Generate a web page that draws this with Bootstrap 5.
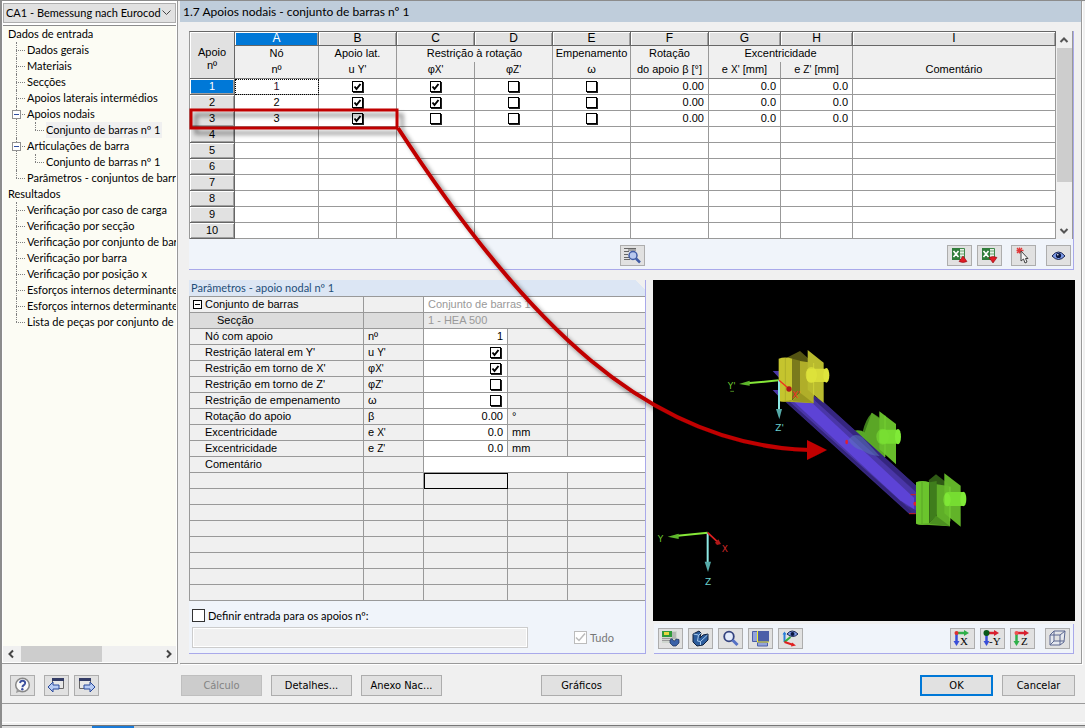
<!DOCTYPE html>
<html lang="pt">
<head>
<meta charset="utf-8">
<meta name="viewport" content="width=device-width, initial-scale=1">
<title>1.7 Apoios nodais</title>
<link href="https://cdn.jsdelivr.net/npm/bootstrap@5.3.0/dist/css/bootstrap.min.css" rel="stylesheet">
<style>
  body { font-family: Lato, "Noto Sans", sans-serif; font-size: 11px; line-height: 16px; color: #000; background: #f0f0f0; }
  .app { border-left: 2px solid #8c8c8c; border-top: 1px solid #8c8c8c; }
  .grid-font { font-family: "Liberation Sans", Arial, sans-serif; font-size: 11px; }

  /* navigation */
  .side { width: 176px; flex: none; background: #fff; border-right: 1px solid #999; border-bottom: 1px solid #999; padding: 2px 1px 1px; }
  .case-select { appearance: none; width: 100%; height: 20px; border: 1px solid #adadad; border-radius: 0; padding: 0 14px 0 2px; font-size: 11px; line-height: 16px; color: #000;
    background: #e1e1e1 url("data:image/svg+xml,%3Csvg xmlns='http://www.w3.org/2000/svg' width='9' height='6'%3E%3Cpath d='M.5.5l4 4 4-4' fill='none' stroke='%23444'/%3E%3C/svg%3E") no-repeat right 4px center; }
  .tree-box { background: #fcfcf4; border-top: 1px solid #8c8c8c; margin-top: 2px; overflow: hidden; padding-left: 5px; }
  .tree, .tree ul { list-style: none; margin: 0; padding: 0; white-space: nowrap; }
  .tree a { color: #000; text-decoration: none; display: inline-block; height: 16px; vertical-align: top; }
  .tree a.active { background: #f0f0f0; padding-right: 2px; }
  .tree ul li { position: relative; padding-left: 19px; }
  .tree ul li::before { content: ""; position: absolute; left: 8px; top: 0; bottom: 0; border-left: 1px dotted #808080; }
  .tree ul li:last-child::before { bottom: auto; height: 8px; }
  .tree ul li::after { content: ""; position: absolute; left: 8px; top: 8px; width: 9px; border-top: 1px dotted #808080; }
  .twisty { position: absolute; z-index: 1; left: 4px; top: 4px; width: 9px; height: 9px; padding: 0; border: 1px solid #919191; background: linear-gradient(#2f4f9f, #2f4f9f) center/5px 1px no-repeat #fff; }
  .hscroll { height: 16px; background: #f0f0f0; }
  .hscroll .thumb { width: 81px; background: #cdcdcd; margin-left: 4px; }

  /* main page */
  .sheet { border-right: 1px solid #999; border-bottom: 1px solid #999; margin-right: 3px; margin-left: 2px; box-shadow: 1px 1px #fff; }
  .sheet-title { background: #bfcddb; height: 21px; line-height: 21px; font-size: 12px; font-weight: 400; padding-left: 3px; margin: 0; }
  .panel-box { background: #f0f4fa; border: solid #a9a9ea; border-width: 0 1px 1px 0; }
  .top-panel { margin: 9px 7px 0 9px; }
  .lower { margin: 10px 6px 9px 9px; gap: 7px; }
  .data { border-collapse: separate; border-spacing: 0; table-layout: fixed; width: 100%; border-left: 1px solid #999; }
  .data th, .data td { font-weight: 400; padding: 0 4px; height: 16px; line-height: 15px; border: solid #999; border-width: 0 1px 1px 0; white-space: nowrap; overflow: hidden; }
  .supports { border-top: 1px solid #666; }
  .supports td { background: #fff; text-align: center; }
  .supports td.num { text-align: right; }
  .supports thead th { background: #f0f0f0; text-align: center; padding: 0; }
  .supports thead .letters th { height: 14px; line-height: 13px; background: #e1e1e1; border-color: #666; box-shadow: inset 1px 1px #fff, inset -1px 0 #a0a0a0; font-size: 12px; }
  .supports thead .letters th.on { background: #0078d7; color: #fff; }
  .supports thead .letters .corner { font-size: 11px; box-shadow: inset 1px 1px #fff; padding-top: 8px; }
  .supports .names th { border-bottom: 0; height: 16px; line-height: 14px; vertical-align: top; }
  .supports .units th { height: 17px; border-bottom-color: #808080; line-height: 14px; vertical-align: top; }
  .supports tbody th { background: #e1e1e1; text-align: center; border-color: #666; line-height: 13px; box-shadow: inset 1px 1px #fff, inset -1px -1px #a0a0a0; }
  .supports tbody th.on { background: #0078d7; color: #fff; }
  .supports td.focused { outline: 1px dotted #000; outline-offset: -1px; color: #301030; }
  .tiny { font-size: 10px; }
  .tick { appearance: none; display: block; width: 11px; height: 11px; margin: 0 auto; border: 1px solid #000; background: #fff; box-shadow: 1px 1px #222; }
  .tick:checked { background: #fff url("data:image/svg+xml,%3Csvg xmlns='http://www.w3.org/2000/svg' width='9' height='9'%3E%3Cpath d='M1.500 4.500l2 2.500 4-5' fill='none' stroke='%23000' stroke-width='2'/%3E%3C/svg%3E") center no-repeat; }
  .vscroll { width: 17px; flex: none; background: #f0f0f0; border-right: 1px solid #999; }
  .vscroll .thumb { height: 134px; background: #cdcdcd; margin: 0 0 0 1px; }
  .vscroll svg, .hscroll svg { display: block; flex: none; }
  .tool { width: 25px; height: 21px; flex: none; padding: 0; border: 1px solid #adadad; border-radius: 0; background: #e1e1e1; display: flex; align-items: center; justify-content: center; }
  .tool svg { display: block; }
  .tool-row { height: 30px; padding: 2px 2px 0 5px; }

  .left-panel { width: 457px; flex: none; }
  .panel-title { background: linear-gradient(225deg, #f0f0f0 7px, #dce6f4 7px); height: 16px; line-height: 16px; color: #1f4e79; font-size: 11px; font-weight: 400; margin: 0; padding-left: 2px; }
  .props { border-top: 1px solid #999; }
  .props th, .props td { background: #f0f0f0; text-align: left; }
  .props th { padding-left: 15px; position: relative; }
  .props td.val { background: #fff; text-align: right; }
  .props td.wide { background: #fff; color: #999; text-align: left; }
  .props .sub th, .props .sub td { background: #dcdcdc; }
  .props .sub td.wide { background: #eaeaea; }
  .props th.sub-name { padding-left: 27px; }
  .props .tick { margin: 0 2px 0 auto; }
  .props td.cursor { outline: 1px solid #000; outline-offset: -1px; }
  .props tr > :last-child { border-right: 0; }
  .minus { position: absolute; left: 3px; top: 3px; width: 9px; height: 9px; padding: 0; border: 1px solid #000; background: linear-gradient(#000, #000) center/5px 1px no-repeat #fff; }
  .apply { height: 52px; padding: 8px 0 0 3px; }
  .apply-row { height: 13px; gap: 3px; margin-bottom: 5px; }
  .box13 { appearance: none; flex: none; width: 13px; height: 13px; margin: 0; border: 1px solid #333; background: #fff; }
  .box13:disabled { border-color: #bcbcbc; }
  .box13:checked { background: #fff url("data:image/svg+xml,%3Csvg xmlns='http://www.w3.org/2000/svg' width='11' height='11'%3E%3Cpath d='M1 5.500l3 3 6-7' fill='none' stroke='%23bbb' stroke-width='1.500'/%3E%3C/svg%3E") center no-repeat; }
  .node-list { width: 336px; height: 21px; border: 1px solid #ccc; outline: 1px solid #fff; outline-offset: -2px; background: #f0f0f0; margin-right: 46px; }
  .muted-label { color: #777; margin-left: 3px; }
  .view { background: #000; height: 341px; flex: auto; display: block; width: 100%; }
  .view text { font-family: "DejaVu Sans", sans-serif; font-size: 27px; }
  .view-tools { height: 30px; margin: 3px 1px 0 1px; padding: 0 3px 0 4px; gap: 5px; }

  /* bottom bars */
  .commands { height: 39px; padding: 11px 10px 0 8px; }
  .cmd { height: 21px; width: 81px; border: 1px solid #adadad; border-radius: 0; background: #e1e1e1; color: #000; padding: 0; font-family: "DejaVu Sans Condensed", "Noto Sans", sans-serif; font-size: 11px; line-height: 18px; }
  .cmd:disabled { background: #ccc; color: #838383; border-color: #bfbfbf; }
  .cmd.short { width: 73px; }
  .cmd.primary { border: 2px solid #0078d7; line-height: 16px; }
  .status { height: 20px; border-top: 1px solid #999; border-bottom: 1px solid #fff; }
  .edge { height: 3px; border-top: 1px solid #777; margin-top: 2px; background: linear-gradient(90deg, #ddd 90px, #1b7bd8 90px, #1b7bd8 132px, #d0d0d0 132px); }
  .callout { position: absolute; left: 0; top: 0; z-index: 5; pointer-events: none; }
</style>
</head>
<body>
<div class="app d-flex flex-column min-vh-100 position-relative">
  <div class="d-flex flex-grow-1">
    <nav class="side d-flex flex-column">
      <select class="case-select" aria-label="Caso"><option>CA1 - Bemessung nach Eurocod</option></select>
      <div class="tree-box flex-grow-1">
        <ul class="tree">
          <li><a href="#">Dados de entrada</a>
            <ul>
              <li><a href="#">Dados gerais</a></li>
              <li><a href="#">Materiais</a></li>
              <li><a href="#">Secções</a></li>
              <li><a href="#">Apoios laterais intermédios</a></li>
              <li><button class="twisty" aria-label="Recolher"></button><a href="#">Apoios nodais</a>
                <ul><li><a href="#" class="active">Conjunto de barras nº 1</a></li></ul></li>
              <li><button class="twisty" aria-label="Recolher"></button><a href="#">Articulações de barra</a>
                <ul><li><a href="#">Conjunto de barras nº 1</a></li></ul></li>
              <li><a href="#">Parâmetros - conjuntos de barr</a></li>
            </ul>
          </li>
          <li><a href="#">Resultados</a>
            <ul>
              <li><a href="#">Verificação por caso de carga</a></li>
              <li><a href="#">Verificação por secção</a></li>
              <li><a href="#">Verificação por conjunto de bar</a></li>
              <li><a href="#">Verificação por barra</a></li>
              <li><a href="#">Verificação por posição x</a></li>
              <li><a href="#">Esforços internos determinante</a></li>
              <li><a href="#">Esforços internos determinante</a></li>
              <li><a href="#">Lista de peças por conjunto de</a></li>
            </ul>
          </li>
        </ul>
      </div>
      <div class="hscroll d-flex align-items-stretch">
        <svg width="14" height="16"><path d="M10 4.500L6.500 8l3.500 3.500" fill="none" stroke="#444" stroke-width="2"/></svg>
        <div class="thumb"></div>
        <svg class="ms-auto" width="14" height="16"><path d="M5 4.500L8.500 8 5 11.500" fill="none" stroke="#444" stroke-width="2"/></svg>
      </div>
    </nav>

    <main class="sheet flex-grow-1 d-flex flex-column">
      <h1 class="sheet-title">1.7 Apoios nodais - conjunto de barras nº 1</h1>
      <section class="panel-box grid-font top-panel">
        <div class="d-flex">
          <table class="data supports">
            <colgroup><col style="width:45px"><col style="width:84px"><col style="width:78px"><col style="width:78px"><col style="width:78px"><col style="width:78px"><col style="width:78px"><col style="width:72px"><col style="width:72px"><col></colgroup>
            <thead>
              <tr class="letters"><th rowspan="3" class="corner">Apoio<br>nº</th><th class="on">A</th><th>B</th><th>C</th><th>D</th><th>E</th><th>F</th><th>G</th><th>H</th><th>I</th></tr>
              <tr class="names"><th>Nó</th><th>Apoio lat.</th><th colspan="2">Restrição à rotação</th><th>Empenamento</th><th>Rotação</th><th colspan="2">Excentricidade</th><th></th></tr>
              <tr class="units"><th>nº</th><th>u <span class="tiny">Y'</span></th><th>φ<span class="tiny">X'</span></th><th>φ<span class="tiny">Z'</span></th><th>ω</th><th>do apoio β [°]</th><th>e <span class="tiny">X'</span> [mm]</th><th>e <span class="tiny">Z'</span> [mm]</th><th>Comentário</th></tr>
            </thead>
            <tbody>
              <tr><th class="on">1</th><td class="focused">1</td><td><input class="tick" type="checkbox" aria-label="uY 1" checked></td><td><input class="tick" type="checkbox" aria-label="φX 1" checked></td><td><input class="tick" type="checkbox" aria-label="φZ 1"></td><td><input class="tick" type="checkbox" aria-label="ω 1"></td><td class="num">0.00</td><td class="num">0.0</td><td class="num">0.0</td><td></td></tr>
              <tr><th>2</th><td>2</td><td><input class="tick" type="checkbox" aria-label="uY 2" checked></td><td><input class="tick" type="checkbox" aria-label="φX 2" checked></td><td><input class="tick" type="checkbox" aria-label="φZ 2"></td><td><input class="tick" type="checkbox" aria-label="ω 2"></td><td class="num">0.00</td><td class="num">0.0</td><td class="num">0.0</td><td></td></tr>
              <tr><th>3</th><td>3</td><td><input class="tick" type="checkbox" aria-label="uY 3" checked></td><td><input class="tick" type="checkbox" aria-label="φX 3"></td><td><input class="tick" type="checkbox" aria-label="φZ 3"></td><td><input class="tick" type="checkbox" aria-label="ω 3"></td><td class="num">0.00</td><td class="num">0.0</td><td class="num">0.0</td><td></td></tr>
              <tr><th>4</th><td></td><td></td><td></td><td></td><td></td><td></td><td></td><td></td><td></td></tr>
              <tr><th>5</th><td></td><td></td><td></td><td></td><td></td><td></td><td></td><td></td><td></td></tr>
              <tr><th>6</th><td></td><td></td><td></td><td></td><td></td><td></td><td></td><td></td><td></td></tr>
              <tr><th>7</th><td></td><td></td><td></td><td></td><td></td><td></td><td></td><td></td><td></td></tr>
              <tr><th>8</th><td></td><td></td><td></td><td></td><td></td><td></td><td></td><td></td><td></td></tr>
              <tr><th>9</th><td></td><td></td><td></td><td></td><td></td><td></td><td></td><td></td><td></td></tr>
              <tr><th>10</th><td></td><td></td><td></td><td></td><td></td><td></td><td></td><td></td><td></td></tr>
            </tbody>
          </table>
          <div class="vscroll d-flex flex-column">
            <svg width="16" height="17"><path d="M4.500 11L8 7.500l3.500 3.500" fill="none" stroke="#555" stroke-width="2"/></svg>
            <div class="thumb"></div>
            <svg class="mt-auto" width="16" height="17"><path d="M4.500 7L8 10.500 11.500 7" fill="none" stroke="#555" stroke-width="2"/></svg>
          </div>
        </div>
        <div class="tool-row d-flex align-items-center">
          <div class="col"></div>
          <button class="tool" aria-label="Procurar">
            <svg width="19" height="17" viewBox="0 0 19 17"><path d="M1 1.500h12M1 4.500h5M1 7.500h4M1 10.500h5M5 3h8M1 12.500h6" stroke="#666"/><circle cx="10" cy="8.500" r="4" fill="#b8c8ee" stroke="#3f5ba5" stroke-width="1.500"/><path d="M13 11.500l4 4" stroke="#3f5ba5" stroke-width="2.500"/></svg>
          </button>
          <div class="col d-flex justify-content-end">
            <button class="tool" aria-label="Exportar para Excel" style="margin-right:5px">
              <svg width="19" height="17" viewBox="0 0 19 17"><path d="M2.500 1.500h12v11h-12z" fill="#e4f0e4" stroke="#3f8a4a"/><path d="M2 1h8v12H2z" fill="#2f7d3b"/><path d="M3.500 4l5 6M8.500 4l-5 6" stroke="#fff" stroke-width="1.600"/><path d="M10 4h4M10 7h4M10 10h4" stroke="#6aa574"/><path d="M9 14.500L13 9l4 5.500q-4 2-8 0z" fill="#e01b24" stroke="#8b0a10" stroke-width=".6"/></svg>
            </button>
            <button class="tool" aria-label="Importar do Excel" style="margin-right:9px">
              <svg width="19" height="17" viewBox="0 0 19 17"><path d="M2.500 1.500h12v11h-12z" fill="#e4f0e4" stroke="#3f8a4a"/><path d="M2 1h8v12H2z" fill="#2f7d3b"/><path d="M3.500 4l5 6M8.500 4l-5 6" stroke="#fff" stroke-width="1.600"/><path d="M10 4h4M10 7h4" stroke="#6aa574"/><path d="M9 10.500q4-2 8 0L13 16z" fill="#e01b24" stroke="#8b0a10" stroke-width=".6"/></svg>
            </button>
            <button class="tool" aria-label="Selecionar" style="margin-right:10px">
              <svg width="19" height="17" viewBox="0 0 19 17"><path d="M3 1l5 5M8 1L3 6M5.500.5v6M2.500 3.500h7" stroke="#e03838" stroke-width="1.300"/><path d="M7 4v10l2.500-2 1.500 4 2-1-1.500-3.500H14z" fill="#f4f4f4" stroke="#444"/></svg>
            </button>
            <button class="tool" aria-label="Visualizar">
              <svg width="17" height="15" viewBox="0 0 17 15"><path d="M2 8q6.500-8 13 0-6.500 7-13 0z" fill="#7d9bea" stroke="#1a2550"/><circle cx="8.500" cy="7.500" r="2.600" fill="#0a1640"/><circle cx="7.800" cy="6.800" r=".8" fill="#fff"/></svg>
            </button>
          </div>
        </div>
      </section>

      <div class="lower d-flex flex-grow-1">
        <section class="left-panel panel-box d-flex flex-column">
          <h2 class="panel-title">Parâmetros - apoio nodal nº 1</h2>
          <table class="data props grid-font">
            <colgroup><col style="width:174px"><col style="width:60px"><col style="width:84px"><col style="width:60px"><col></colgroup>
            <tbody>
              <tr><th><button class="minus" aria-label="Recolher"></button>Conjunto de barras</th><td></td><td colspan="3" class="wide">Conjunto de barras 1</td></tr>
              <tr class="sub"><th class="sub-name">Secção</th><td></td><td colspan="3" class="wide">1 - HEA 500</td></tr>
              <tr><th>Nó com apoio</th><td>nº</td><td class="val">1</td><td></td><td></td></tr>
              <tr><th>Restrição lateral em Y'</th><td>u <span class="tiny">Y'</span></td><td class="val"><input class="tick" type="checkbox" aria-label="Restrição lateral em Y'" checked></td><td></td><td></td></tr>
              <tr><th>Restrição em torno de X'</th><td>φ<span class="tiny">X'</span></td><td class="val"><input class="tick" type="checkbox" aria-label="Restrição em torno de X'" checked></td><td></td><td></td></tr>
              <tr><th>Restrição em torno de Z'</th><td>φ<span class="tiny">Z'</span></td><td class="val"><input class="tick" type="checkbox" aria-label="Restrição em torno de Z'"></td><td></td><td></td></tr>
              <tr><th>Restrição de empenamento</th><td>ω</td><td class="val"><input class="tick" type="checkbox" aria-label="Restrição de empenamento"></td><td></td><td></td></tr>
              <tr><th>Rotação do apoio</th><td>β</td><td class="val">0.00</td><td>°</td><td></td></tr>
              <tr><th>Excentricidade</th><td>e <span class="tiny">X'</span></td><td class="val">0.0</td><td>mm</td><td></td></tr>
              <tr><th>Excentricidade</th><td>e <span class="tiny">Z'</span></td><td class="val">0.0</td><td>mm</td><td></td></tr>
              <tr><th>Comentário</th><td></td><td colspan="3" class="wide"></td></tr>
              <tr><th></th><td></td><td class="cursor"></td><td></td><td></td></tr>
              <tr><th></th><td></td><td></td><td></td><td></td></tr>
              <tr><th></th><td></td><td></td><td></td><td></td></tr>
              <tr><th></th><td></td><td></td><td></td><td></td></tr>
              <tr><th></th><td></td><td></td><td></td><td></td></tr>
              <tr><th></th><td></td><td></td><td></td><td></td></tr>
              <tr><th></th><td></td><td></td><td></td><td></td></tr>
              <tr><th></th><td></td><td></td><td></td><td></td></tr>
            </tbody>
          </table>
          <div class="apply">
            <div class="apply-row d-flex align-items-center">
              <input class="box13" type="checkbox" id="apply"><label for="apply">Definir entrada para os apoios nº:</label>
            </div>
            <div class="d-flex align-items-center">
              <input class="node-list" type="text" aria-label="Apoios nº" disabled>
              <input class="box13" type="checkbox" id="all" checked disabled><label for="all" class="muted-label">Tudo</label>
            </div>
          </div>
        </section>

        <section class="col d-flex flex-column">
          <svg class="view" viewBox="39 15 1266 1023" preserveAspectRatio="xMinYMin meet" role="img" aria-label="Modelo 3D">
            <path d="M398 288h19v20zM398 345h19v20z" fill="#4a38a8"/>
            <path d="M668 470q8-36 28-57l34 22v120l-48-42z" fill="#3f7d1c"/>
            <path d="M695 413l40 30v110l-55-50 -15-5z" fill="#5aa626"/>
            <path d="M718 409l50 38v121l-50-45z" fill="#67bd2b"/>
            <path d="M735 422v124" stroke="#7ddb38" stroke-width="2"/>
            <ellipse cx="653" cy="488" rx="30" ry="22" fill="#58a828"/>
            <rect x="718" y="464" width="62" height="42" rx="10" fill="#76dc31"/><ellipse cx="774" cy="485" rx="9" ry="23" fill="#80ea38"/><ellipse cx="728" cy="485" rx="19" ry="24" fill="#7ae034" opacity=".6"/>
            <path d="M436 380L522 362 552 382 828 632V716H807z" fill="#3a2a86"/>
            <path d="M444 380L520 372 828 652V706L800 692z" fill="#4a36a8"/>
            <path d="M462 380l46-4L822 668v34L780 676z" fill="#5d43d6"/>
            <path d="M446 382L812 712" stroke="#33247a" stroke-width="7"/>
            <path d="M530 372L828 640" stroke="#352680" stroke-width="13"/>
            <path d="M625 495q18-26 42-8l52 56q-30-2-50-16-30-6-44-32z" fill="#5a74b8" opacity=".55"/>
            <path d="M807 716h20M812 659h16" stroke="#c22" stroke-width="3"/><ellipse cx="620" cy="501" rx="4" ry="7" fill="#e02030"/><circle cx="826" cy="686" r="6" fill="#e02030"/>
            <path d="M866 616l22-18 38 30-6 100-34-10z" fill="#2f5a15"/>
            <path d="M828 622q18-8 40 0v124q-20 8-40 0z" fill="#6bc42d"/>
            <path d="M846 619v129" stroke="#5aa626" stroke-width="3"/>
            <path d="M868 622l22-4v106l-22 20z" fill="#3f7d1c"/>
            <path d="M890 628l40 6v120l-102-6 40-4 22-20z" fill="#5fae28"/>
            <path d="M868 746l20-24 42 32z" fill="#4b8f20"/>
            <path d="M913 595l49 37v123l-49-40z" fill="#67bd2b" opacity=".95"/>
            <path d="M930 635v104" stroke="#83e040" stroke-width="2"/>
            <rect x="915" y="651" width="60" height="42" rx="9" fill="#76dc31"/><ellipse cx="970" cy="672" rx="9" ry="22" fill="#80ea38"/><ellipse cx="921" cy="674" rx="11" ry="20" fill="#85f03a" opacity=".6"/>
            <path d="M440 248l40-20 38 34v112l-60-2z" fill="#545412"/>
            <path d="M416 251q18-7 41 0v124q-20 8-41 3z" fill="#c5c42e"/><path d="M436 249v129" stroke="#b0b02a" stroke-width="3"/>
            <path d="M457 251l23 6v94l-23 23z" fill="#7a7a1c"/><path d="M480 258l41 6v121l-104-6 40-4 23-22z" fill="#b0ae29"/>
            <path d="M457 378l24-24 40 31z" fill="#98961f"/>
            <path d="M503 225l48 38v121l-48-40z" fill="#b9bb2e"/>
            <path d="M521 264v100" stroke="#dadc3a" stroke-width="2"/>
            <rect x="500" y="281" width="64" height="40" rx="12" fill="#d8dc38"/><ellipse cx="559" cy="301" rx="9" ry="22" fill="#dfe53d"/><ellipse cx="514" cy="300" rx="17" ry="24" fill="#e0e43c" opacity=".7"/>
            <path d="M416 316L320 325" stroke="#86e838" stroke-width="6"/><path d="M297 327l32-10v15z" fill="#5db52b"/>
            <path d="M417 316v88" stroke="#8ee9e4" stroke-width="6"/><path d="M408 402h18l-8 31z" fill="#55aaa8"/>
            <path d="M417 316l28 24" stroke="#f03020" stroke-width="4"/><circle cx="447" cy="342" r="8" fill="#b01818"/>
            <text x="263" y="341" fill="#6cc830">Y'</text><path d="M271 349h11" stroke="#6cc830" stroke-width="2"/><text x="406" y="468" fill="#6cd0cc">Z'</text><text x="456" y="370" fill="#f03028">X'</text>
            <path d="M203 773L105 783" stroke="#86e838" stroke-width="6"/><path d="M83 785l33-9v16z" fill="#5db52b"/>
            <path d="M203 774v88" stroke="#8ee9e4" stroke-width="6"/><path d="M194 860h19l-9 31z" fill="#55aaa8"/>
            <path d="M203 773l28 26" stroke="#e02020" stroke-width="5"/><path d="M225 803l10-10 8 14-12 3z" fill="#b01818"/>
            <text x="53" y="801" fill="#6cc830">Y</text><text x="195" y="929" fill="#6cd0cc">Z</text><text x="245" y="830" fill="#d02828">X</text>
          </svg>
          <div class="view-tools panel-box d-flex align-items-center">
            <button class="tool" aria-label="Renderização">
              <svg width="19" height="17" viewBox="0 0 19 17"><path d="M1 1h15v12H1z" fill="#cfd6cf"/><path d="M1 1h10v6H1z" fill="#2f9a3b"/><path d="M3 2h5v3H3z" fill="#e8d840"/><path d="M1 8.500h9M1 10.500h9M12 2v7M14 2v7" stroke="#999"/><path d="M9 10l2-1.500 1 2 2 .5 1-2 3 .5v3.500L15 16h-3l-3-3z" fill="#3b62a8" stroke="#1b2d55" stroke-width=".7"/></svg>
            </button>
            <button class="tool" aria-label="Modelo">
              <svg width="19" height="17" viewBox="0 0 19 17"><path d="M2 4l6-3 2 2-1 5 3-3 5-1v6l-5 5-6 1-4-4z" fill="#2c5c9c" stroke="#10203c"/><path d="M2.500 4l5 1-1 6 3 .5L16.500 5M8 5l2-2M9.500 11.500V15" fill="none" stroke="#a8cbee"/></svg>
            </button>
            <button class="tool" aria-label="Zoom">
              <svg width="19" height="17" viewBox="0 0 19 17"><circle cx="8" cy="6.500" r="4.800" fill="#e3ebfb" stroke="#34437f" stroke-width="1.800"/><path d="M11.500 10l5 5" stroke="#5571c4" stroke-width="3"/></svg>
            </button>
            <button class="tool" aria-label="Janelas">
              <svg width="19" height="17" viewBox="0 0 19 17"><path d="M1.500 1.500h5v10h-5zM6.500 12.500h10v3.500h-10z" fill="#93a3da" stroke="#4c5fa8"/><path d="M7 1h11v11H7z" fill="#4c5fa8"/><path d="M6.500 1v11H18" fill="none" stroke="#f2ee30"/></svg>
            </button>
            <button class="tool me-auto" aria-label="Vista">
              <svg width="19" height="17" viewBox="0 0 19 17"><path d="M6 4q5-6 11 0-5 5-11 0z" fill="#7d9bea" stroke="#1a2550"/><circle cx="11.500" cy="4" r="2" fill="#0a1640"/><path d="M3.500 3v9" stroke="#2b7ed8" stroke-width="2"/><path d="M3.500 12l6-5" stroke="#2fae3f" stroke-width="2"/><path d="M3.500 12l9 3" stroke="#e02020" stroke-width="2"/><path d="M1.500 4.500l2-3 2 3z" fill="#2b7ed8"/><path d="M11 12.500l4 3-5 1z" fill="#e02020"/></svg>
            </button>
            <button class="tool" aria-label="Vista X">
              <svg width="19" height="17" viewBox="0 0 19 17"><path d="M3 3h9" stroke="#2fb04a" stroke-width="2.500"/><path d="M11 0l5 3-5 3z" fill="#2fb04a"/><path d="M3.500 4v8" stroke="#3a4fd8" stroke-width="2.500"/><path d="M.5 11h6l-3 5z" fill="#3a4fd8"/><circle cx="3.500" cy="3" r="2" fill="#e03030"/><text x="7" y="15" font-family="Liberation Serif" font-size="11">X</text></svg>
            </button>
            <button class="tool" aria-label="Vista -Y">
              <svg width="19" height="17" viewBox="0 0 19 17"><path d="M3 3h9" stroke="#d82030" stroke-width="2.500"/><path d="M11 0l5 3-5 3z" fill="#d82030"/><path d="M3.500 4v8" stroke="#3a4fd8" stroke-width="2.500"/><path d="M.5 11h6l-3 5z" fill="#3a4fd8"/><circle cx="3.500" cy="3" r="3" fill="#0a5a18"/><text x="6" y="15" font-family="Liberation Serif" font-size="11">-Y</text></svg>
            </button>
            <button class="tool" aria-label="Vista Z" style="margin-right:5px">
              <svg width="19" height="17" viewBox="0 0 19 17"><path d="M3 3h9" stroke="#d82030" stroke-width="2.500"/><path d="M11 0l5 3-5 3z" fill="#d82030"/><path d="M3.500 4v8" stroke="#2fb04a" stroke-width="2.500"/><path d="M.5 11h6l-3 5z" fill="#2fb04a"/><circle cx="3.500" cy="3" r="2" fill="#f05050"/><text x="8" y="15" font-family="Liberation Serif" font-size="11">Z</text></svg>
            </button>
            <button class="tool" aria-label="Isométrica">
              <svg width="19" height="17" viewBox="0 0 19 17"><path d="M2 5l4-4h11l-1 11-4 3H2zM2 5h10l5-4M12 5v10M6 1v10h10M6 11l-4 4" fill="#e8ecf8" fill-opacity=".6" stroke="#5a6690"/></svg>
            </button>
          </div>
        </section>
      </div>
    </main>
  </div>

  <footer>
    <div class="commands d-flex">
      <button class="tool" aria-label="Ajuda">
        <svg width="19" height="17" viewBox="0 0 19 17"><circle cx="9.500" cy="8" r="6.800" fill="#fafafa" stroke="#888" stroke-width="1.500"/><path d="M4 12l-1 4 5-2z" fill="#999"/><path d="M7 6q.5-2.500 3-2.200 2.500.4 2 2.700-.4 1.200-1.600 1.800-.9.500-.9 2" fill="none" stroke="#3b4f9e" stroke-width="2"/><circle cx="9.300" cy="12.300" r="1.200" fill="#3b4f9e"/></svg>
      </button>
      <button class="tool" aria-label="Anterior" style="margin-left:9px">
        <svg width="19" height="17" viewBox="0 0 19 17"><path d="M5.500 1.500h11v10h-11z" fill="#e8e8e8" stroke="#666"/><path d="M5 1h12v3H5z" fill="#333c66"/><path d="M1 10l5-5v3h6v4H6v3z" fill="#b8ccf4" stroke="#2a4a9c"/></svg>
      </button>
      <button class="tool" aria-label="Seguinte" style="margin-left:5px">
        <svg width="19" height="17" viewBox="0 0 19 17"><path d="M2.500 1.500h11v10h-11z" fill="#e8e8e8" stroke="#666"/><path d="M2 1h12v3H2z" fill="#333c66"/><path d="M18 10l-5-5v3H7v4h6v3z" fill="#b8ccf4" stroke="#2a4a9c"/></svg>
      </button>
      <button class="cmd" style="margin-left:82px" disabled>Cálculo</button>
      <button class="cmd" style="margin-left:9px">Detalhes...</button>
      <button class="cmd" style="margin-left:9px">Anexo Nac...</button>
      <button class="cmd" style="margin-left:99px">Gráficos</button>
      <button class="cmd short primary ms-auto">OK</button>
      <button class="cmd short" style="margin-left:9px">Cancelar</button>
    </div>
    <div class="status"></div>
    <div class="edge"></div>
  </footer>

  <svg class="callout" width="900" height="500" viewBox="2 1 900 500" aria-hidden="true">
    <defs><filter id="soft" x="-20%" y="-20%" width="150%" height="150%"><feDropShadow dx="5" dy="5" stdDeviation="2" flood-color="#000" flood-opacity=".45"/></filter></defs>
    <g filter="url(#soft)">
      <rect x="191" y="110" width="206" height="18" fill="none" stroke="#c00000" stroke-width="3"/>
      <path d="M398 128C524 322 648 446 810 450" fill="none" stroke="#c00000" stroke-width="4"/>
      <path d="M807 440l20 10-20 10z" fill="#c00000"/>
    </g>
  </svg>
</div>
<script src="https://cdn.jsdelivr.net/npm/bootstrap@5.3.0/dist/js/bootstrap.bundle.min.js"></script>
</body>
</html>
